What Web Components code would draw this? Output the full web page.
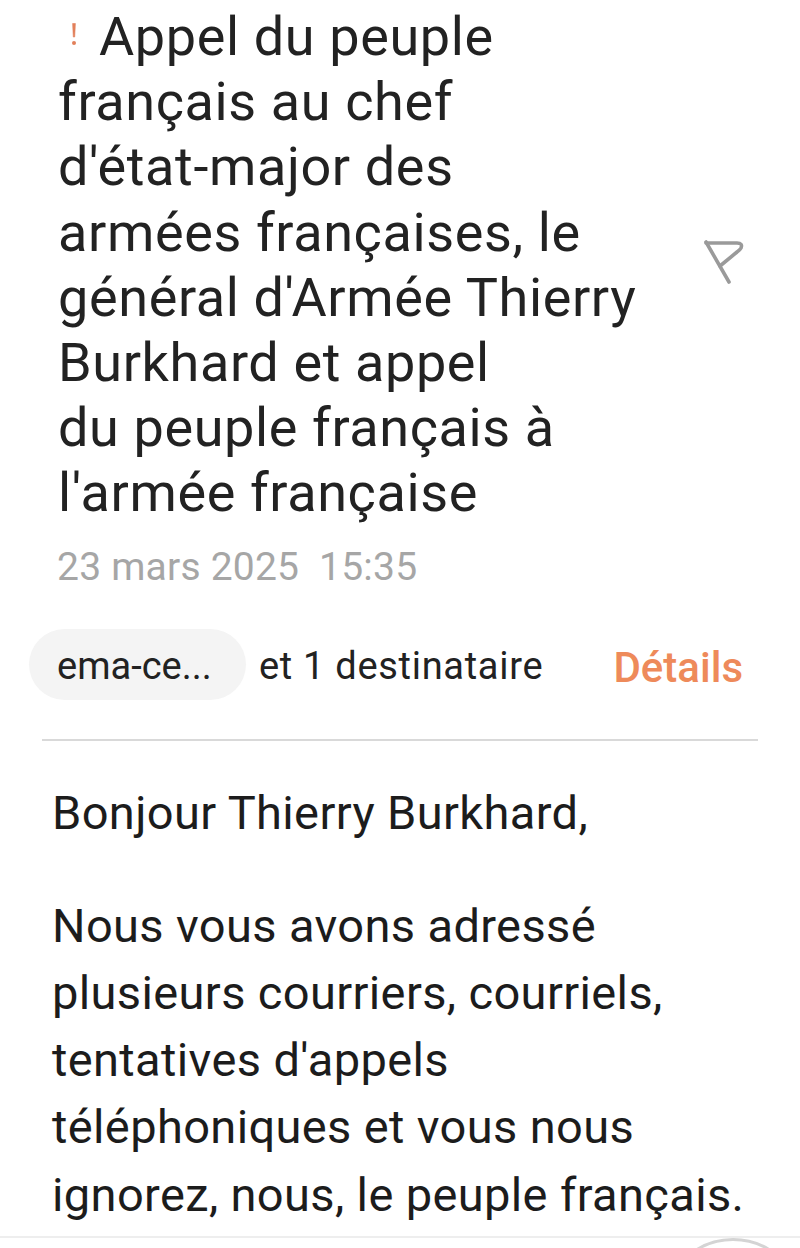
<!DOCTYPE html>
<html lang="fr">
<head>
<meta charset="utf-8">
<title>Appel du peuple français</title>
<style>
  html, body { margin: 0; padding: 0; background: #fff; }
  body { width: 800px; height: 1248px; overflow: hidden; font-family: Roboto, "Liberation Sans", sans-serif; color: #222; }
</style>
</head>
<body>
<mail-view>
  <mail-header>
    <span slot="title">Appel du peuple<br>français au chef<br>d'état-major des<br>armées françaises, le<br>général d'Armée Thierry<br>Burkhard et appel<br>du peuple français à<br>l'armée française</span>
    <span slot="date">23 mars 2025&nbsp; 15:35</span>
  </mail-header>
  <mail-recipients sender="ema-ce..." others="et 1 destinataire" action="Détails"></mail-recipients>
  <mail-body>
    <p>Bonjour Thierry Burkhard,</p>
    <p>Nous vous avons adressé<br>plusieurs courriers, courriels,<br>tentatives d'appels<br>téléphoniques et vous nous<br>ignorez, nous, le peuple français.</p>
  </mail-body>
  <mail-toolbar></mail-toolbar>
</mail-view>

<script>
/* <mail-view> — page column, toolbar is pushed to the bottom */
class MailView extends HTMLElement {
  constructor() {
    super();
    this.attachShadow({ mode: 'open' }).innerHTML = `
      <style>
        :host { display: flex; flex-direction: column; height: 1248px; overflow: hidden; }
        ::slotted(mail-toolbar) { margin-top: auto; }
      </style>
      <slot></slot>`;
  }
}

/* <mail-header> — priority mark + subject, flag on the right, date below */
class MailHeader extends HTMLElement {
  constructor() {
    super();
    this.attachShadow({ mode: 'open' }).innerHTML = `
      <style>
        :host { display: block; padding: 4px 0 0 58px; }
        .row { display: flex; align-items: center; }
        .title { flex: 1; font-size: 54px; letter-spacing: .62px; line-height: 65.2px; color: #222; }
        .mark { display: inline-block; width: 41px; vertical-align: top; padding-left: 10px; box-sizing: border-box; }
        .mark svg { display: inline-block; vertical-align: baseline; transform: translateY(-8px); }
        .flag { display: block; margin: -6px 56px 0 0; flex: none; }
        .date { margin-top: 16px; font-size: 39px; letter-spacing: .22px; line-height: 50px; color: #a6a6a6; margin-left: -1px; }
      </style>
      <div class="row">
        <div class="title"><span class="mark"><svg width="12" height="26" viewBox="0 0 12 26"><path d="M4.6 2.5 L5.3 16 H6.7 L7.4 2.5 Z" fill="#e2805a" stroke="#e2805a" stroke-width=".6" stroke-linejoin="round"/><circle cx="6" cy="22" r="2" fill="#e2805a"/></svg></span><slot name="title"></slot></div>
        <svg class="flag" width="40" height="44" viewBox="0 0 40 44" fill="none" stroke="#9a9a9a" stroke-width="3.6" stroke-linecap="round" stroke-linejoin="round"><path d="M2 2 L25 42"/><path d="M2 3 H33 Q39 3 37 8 Q36 10 33 12 L16 26"/></svg>
      </div>
      <div class="date"><slot name="date"></slot></div>`;
  }
}

/* <mail-recipients> — sender chip, other recipients, details link, rule */
class MailRecipients extends HTMLElement {
  constructor() {
    super();
    this.attachShadow({ mode: 'open' }).innerHTML = `
      <style>
        :host { display: block; margin-top: 37px; padding: 0 42px 0 29px; }
        .row { display: flex; align-items: center; height: 71px; font-size: 38px; color: #222; }
        .chip { background: #f4f4f4; border-radius: 36px; height: 71px; width: 217px; box-sizing: border-box; padding: 3px 0 0 28px; display: flex; align-items: center; }
        .others { margin: 3px 0 0 13px; flex: 1; letter-spacing: .7px; }
        .action { color: #ee8a5a; font-weight: 500; font-size: 42px; margin: 7px 15px 0 0; }
        .rule { height: 2px; background: #d9d9d9; margin: 39px 0 0 13px; }
      </style>
      <div class="row">
        <span class="chip">${this.getAttribute('sender')}</span>
        <span class="others">${this.getAttribute('others')}</span>
        <span class="action">${this.getAttribute('action')}</span>
      </div>
      <div class="rule"></div>`;
  }
}

/* <mail-body> — message text */
class MailBody extends HTMLElement {
  constructor() {
    super();
    this.attachShadow({ mode: 'open' }).innerHTML = `
      <style>
        :host { display: block; padding: 38px 0 0 52px; font-size: 47px; letter-spacing: .37px; line-height: 67.2px; color: #1c1c1c; white-space: nowrap; }
        ::slotted(p) { margin: 0 0 46px; }
        ::slotted(p:last-child) { margin-bottom: 0; }
      </style>
      <slot></slot>`;
  }
}

/* <mail-toolbar> — top of the bottom bar, cut by the window edge */
class MailToolbar extends HTMLElement {
  constructor() {
    super();
    this.attachShadow({ mode: 'open' }).innerHTML = `
      <style>
        :host { display: block; height: 12px; flex: none; border-top: 2px solid #eeeeee; box-sizing: border-box; overflow: hidden; }
        .btn { width: 140px; height: 140px; margin: 0 0 0 663px; border: 3px solid #d4d4d4; border-radius: 50%; box-sizing: border-box; }
      </style>
      <div class="btn"></div>`;
  }
}

customElements.define('mail-view', MailView);
customElements.define('mail-header', MailHeader);
customElements.define('mail-recipients', MailRecipients);
customElements.define('mail-body', MailBody);
customElements.define('mail-toolbar', MailToolbar);
</script>
</body>
</html>
